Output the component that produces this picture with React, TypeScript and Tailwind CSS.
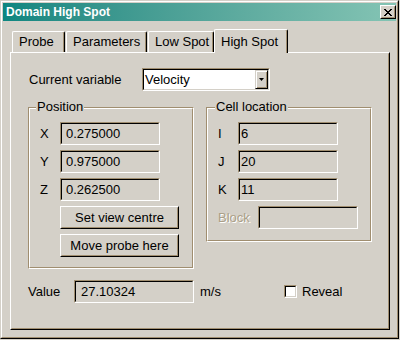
import React from 'react';

function Field({ text, w, pl }: { text: string; w: string; pl: string }) {
  return (
    <div className={`${w} h-[23px] border border-t-[#a08e70] border-l-[#a08e70] border-b-white border-r-white`}>
      <div className={`h-full border border-t-black border-l-black border-b-[#d4d0c8] border-r-[#d4d0c8] bg-[#d4d0c8] flex items-center ${pl} whitespace-nowrap`}>
        {text}
      </div>
    </div>
  );
}

function Button({ label }: { label: string }) {
  return (
    <div className="w-[119px] h-[23px] border border-t-white border-l-white border-b-black border-r-black">
      <div className="h-full border border-t-[#d4d0c8] border-l-[#d4d0c8] border-b-[#a08e70] border-r-[#a08e70] flex items-center justify-center">
        {label}
      </div>
    </div>
  );
}

function Group({ title, w, h, left, children }: { title: string; w: string; h: string; left: string; children: React.ReactNode }) {
  return (
    <div className={`relative ${w} ${h} border border-t-[#a08e70] border-l-[#a08e70] border-b-white border-r-white`}>
      <div className="h-full border border-t-white border-l-white border-b-[#a08e70] border-r-[#a08e70] pl-[10px] pt-[13px]">
        {children}
      </div>
      <span className={`absolute top-[-9px] ${left} px-[1px] leading-[15px] bg-[#d4d0c8]`}>{title}</span>
    </div>
  );
}

function Row({ label, children, lw = 'w-[20px]', dim = false }: { label: string; children: React.ReactNode; lw?: string; dim?: boolean }) {
  return (
    <div className="flex items-center h-[23px]">
      <span className={`${lw} ${dim ? 'text-[#ab9f87] [text-shadow:1px_1px_0_#fff]' : ''}`}>{label}</span>
      {children}
    </div>
  );
}

function Tab({ label, w, ml }: { label: string; w: string; ml: string }) {
  return (
    <div className={`${w} ${ml} h-[21px] border-t border-l border-r border-t-white border-l-white border-r-black rounded-t-[2px] shadow-[inset_-1px_0_0_#a08e70] pl-[6px] flex items-center whitespace-nowrap`}>
      {label}
    </div>
  );
}

export default function App() {
  return (
    <div className="w-[400px] h-[340px] bg-[#d4d0c8] font-['Liberation_Sans',Arial,sans-serif] text-[13px] text-black">
      <div className="w-[399px] h-[339px] border border-t-[#d4d0c8] border-l-[#d4d0c8] border-b-black border-r-black">
        <div className="h-full border border-t-white border-l-white border-b-[#a08e70] border-r-[#a08e70] p-[1px] flex flex-col">
          {/* title bar */}
          <div className="h-[18px] flex items-center bg-gradient-to-r from-[#0c8680] to-[#84c4b4] pl-[3px]">
            <span className="text-white font-bold text-[12px]">Domain High Spot</span>
            <div className="ml-auto w-[16px] h-[14px] border border-t-white border-l-white border-b-black border-r-black bg-[#d4d0c8]">
              <div className="h-full border border-t-[#d4d0c8] border-l-[#d4d0c8] border-b-[#a08e70] border-r-[#a08e70] flex items-center justify-center">
                <svg width="8" height="7" viewBox="0 0 8 7" shapeRendering="crispEdges">
                  <path d="M0.5 0 L7.5 7 M7.5 0 L0.5 7" stroke="black" strokeWidth="1.8" />
                </svg>
              </div>
            </div>
          </div>

          {/* tabs */}
          <div className="h-[31px] flex items-end pl-[9px]">
            <Tab label="Probe" w="w-[53px]" ml="ml-0" />
            <Tab label="Parameters" w="w-[81px]" ml="ml-[1px]" />
            <Tab label="Low Spot" w="w-[66px]" ml="ml-[1px]" />
            <div className="relative z-10 -mb-[1px] w-[74px] h-[24px] bg-[#d4d0c8] border-t border-l border-r border-t-white border-l-white border-r-black rounded-t-[2px] shadow-[inset_-1px_0_0_#a08e70] pl-[6px] flex items-center whitespace-nowrap">
              High Spot
            </div>
          </div>

          {/* panel */}
          <div className="ml-[7px] w-[380px] h-[278px] border border-t-white border-l-white border-b-black border-r-black">
            <div className="h-full border border-t-[#d4d0c8] border-l-[#d4d0c8] border-b-[#a08e70] border-r-[#a08e70] pl-[16px] pt-[14px]">
              <div className="flex items-center h-[23px]">
                <span className="ml-[1px] w-[113px]">Current variable</span>
                <div className="w-[128px] h-[23px] border border-t-[#a08e70] border-l-[#a08e70] border-b-white border-r-white">
                  <div className="h-full border border-t-black border-l-black border-b-[#d4d0c8] border-r-[#d4d0c8] bg-white flex items-center">
                    <span className="pl-[1px]">Velocity</span>
                    <div className="ml-auto w-[13px] h-full border border-t-[#d4d0c8] border-l-[#d4d0c8] border-b-black border-r-black bg-[#d4d0c8] flex items-center justify-center shadow-[inset_1px_1px_0_#fff,inset_-1px_-1px_0_#a08e70]">
                      <svg width="5" height="3" viewBox="0 0 5 3">
                        <polygon points="0,0 5,0 2.5,3" fill="black" />
                      </svg>
                    </div>
                  </div>
                </div>
              </div>

              <div className="mt-[16px] flex items-start gap-[12px]">
                <Group title="Position" w="w-[166px]" h="h-[162px]" left="left-[7px]">
                  <div className="flex flex-col gap-[5px]">
                    <Row label="X"><Field text="0.275000" w="w-[100px]" pl="pl-[4px]" /></Row>
                    <Row label="Y"><Field text="0.975000" w="w-[100px]" pl="pl-[4px]" /></Row>
                    <Row label="Z"><Field text="0.262500" w="w-[100px]" pl="pl-[4px]" /></Row>
                    <div className="ml-[20px]"><Button label="Set view centre" /></div>
                    <div className="ml-[20px]"><Button label="Move probe here" /></div>
                  </div>
                </Group>
                <Group title="Cell location" w="w-[166px]" h="h-[135px]" left="left-[8px]">
                  <div className="flex flex-col gap-[5px]">
                    <Row label="I"><Field text="6" w="w-[100px]" pl="pl-[1px]" /></Row>
                    <Row label="J"><Field text="20" w="w-[100px]" pl="pl-[1px]" /></Row>
                    <Row label="K"><Field text="11" w="w-[100px]" pl="pl-[1px]" /></Row>
                    <Row label="Block" lw="w-[40px]" dim><Field text="" w="w-[100px]" pl="pl-[1px]" /></Row>
                  </div>
                </Group>
              </div>

              <div className="mt-[11px] flex items-center h-[23px]">
                <span className="w-[46px]">Value</span>
                <Field text="27.10324" w="w-[120px]" pl="pl-[5px]" />
                <span className="ml-[6px] w-[84px]">m/s</span>
                <div className="w-[13px] h-[13px] border border-t-[#a08e70] border-l-[#a08e70] border-b-white border-r-white">
                  <div className="h-full border border-t-black border-l-black border-b-[#d4d0c8] border-r-[#d4d0c8] bg-white" />
                </div>
                <span className="ml-[5px]">Reveal</span>
              </div>
            </div>
          </div>
        </div>
      </div>
    </div>
  );
}
